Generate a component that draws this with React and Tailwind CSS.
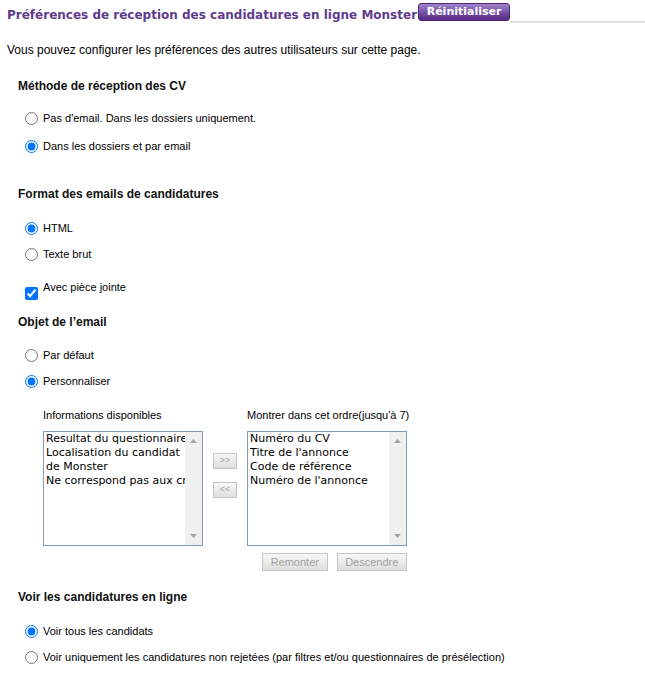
import React from 'react';

const arial = { fontFamily: '"Liberation Sans", Arial, sans-serif' };

function Radio({ checked, label, className = '' }) {
  return (
    <div className={`flex h-[20px] items-center ${className}`}>
      <input type="radio" defaultChecked={checked} className="m-0 ml-[7px] h-[13px] w-[13px] accent-[#0075ff]" />
      <span className="ml-[5px] text-[11px] text-black">{label}</span>
    </div>
  );
}

function Heading({ children, className = '' }) {
  return (
    <div className={`flex h-[20px] items-center text-[12px] font-bold text-[#111] ${className}`}>{children}</div>
  );
}

function ListBox({ items }) {
  return (
    <div className="flex h-[115px] w-[160px] border border-[#7f9db9] bg-white">
      <div
        className="flex-1 overflow-hidden whitespace-nowrap pl-[2px] text-[11px] leading-[14px] text-black"
        style={{ fontFamily: '"DejaVu Sans", Verdana, sans-serif' }}
      >
        {items.map((it) => (
          <div key={it}>{it}</div>
        ))}
      </div>
      <div className="flex w-[17px] flex-col items-center justify-between bg-[#f0f0f0] py-[7px]">
        <svg width="7" height="4" viewBox="0 0 7 4"><path d="M0 4 L3.5 0 L7 4 Z" fill="#a3a3a3" /></svg>
        <svg width="7" height="4" viewBox="0 0 7 4"><path d="M0 0 L3.5 4 L7 0 Z" fill="#a3a3a3" /></svg>
      </div>
    </div>
  );
}

function GrayButton({ children, className = '' }) {
  return (
    <div
      className={`flex items-center justify-center border border-[#c4c4c4] bg-gradient-to-b from-[#f8f8f8] to-[#dedede] text-[#a0a0a0] ${className}`}
    >
      {children}
    </div>
  );
}

export default function App() {
  return (
    <div className="min-h-screen bg-white text-black" style={arial}>
      {/* header */}
      <div className="flex h-[24px] items-end pl-[7px]">
        <span
          className="pb-[3px] text-[12px] font-bold leading-none text-[#5e3b8e]"
          style={{ fontFamily: '"DejaVu Sans", Verdana, sans-serif' }}
        >
          Préférences de réception des candidatures en ligne Monster
        </span>
        <div
          className="mb-[3px] ml-[1px] flex h-[18px] w-[92px] items-center justify-center rounded-[3px] border border-[#4d2777] bg-gradient-to-b from-[#a282c9] via-[#7a52aa] to-[#55297f] text-[11px] font-bold text-white"
          style={{ fontFamily: '"DejaVu Sans", Verdana, sans-serif' }}
        >
          Réinitialiser
        </div>
        <div className="mb-[1px] h-[2px] flex-1 bg-gradient-to-b from-[#d4d4d4] to-[#ececec]" />
      </div>

      <div className="mt-[16px] flex h-[20px] items-center pl-[7px] text-[12px]">
        Vous pouvez configurer les préférences des autres utilisateurs sur cette page.
      </div>

      <div className="pl-[18px]">
        <Heading className="mt-[16px]">Méthode de réception des CV</Heading>
        <Radio className="mt-[12px]" label="Pas d'email. Dans les dossiers uniquement." />
        <Radio className="mt-[8px]" checked label="Dans les dossiers et par email" />

        <Heading className="mt-[28px]">Format des emails de candidatures</Heading>
        <Radio className="mt-[14px]" checked label="HTML" />
        <Radio className="mt-[6px]" label="Texte brut" />

        <div className="mt-[16px] flex h-[20px] items-start">
          <input type="checkbox" defaultChecked className="m-0 ml-[7px] mt-[7px] h-[13px] w-[13px] accent-[#0075ff]" />
          <span className="ml-[5px] text-[11px] leading-[14px]">Avec pièce jointe</span>
        </div>

        <Heading className="mt-[12px]">Objet de l’email</Heading>
        <Radio className="mt-[13px]" label="Par défaut" />
        <Radio className="mt-[6px]" checked label="Personnaliser" />

        <div className="ml-[25px] mt-[14px] flex">
          <div className="w-[160px]">
            <div className="flex h-[20px] items-center text-[11px]">Informations disponibles</div>
            <div className="mt-[6px]">
              <ListBox
                items={[
                  'Resultat du questionnaire',
                  'Localisation du candidat',
                  'de Monster',
                  'Ne correspond pas aux critères',
                ]}
              />
            </div>
          </div>
          <div className="mx-[10px] flex w-[24px] flex-col pt-[48px]">
            <GrayButton className="h-[16px] text-[9px]">&gt;&gt;</GrayButton>
            <GrayButton className="mt-[13px] h-[16px] text-[9px]">&lt;&lt;</GrayButton>
          </div>
          <div className="w-[160px]">
            <div className="flex h-[20px] items-center whitespace-nowrap text-[11px]">Montrer dans cet ordre(jusqu'à 7)</div>
            <div className="mt-[6px]">
              <ListBox items={['Numéro du CV', "Titre de l'annonce", 'Code de référence', "Numéro de l'annonce"]} />
            </div>
            <div className="ml-[15px] mt-[7px] flex gap-[9px]">
              <GrayButton className="h-[18px] w-[67px] text-[11px]">Remonter</GrayButton>
              <GrayButton className="h-[18px] w-[72px] text-[11px]">Descendre</GrayButton>
            </div>
          </div>
        </div>

        <Heading className="mt-[16px]">Voir les candidatures en ligne</Heading>
        <Radio className="mt-[14px]" checked label="Voir tous les candidats" />
        <Radio className="mt-[6px]" label="Voir uniquement les candidatures non rejetées (par filtres et/ou questionnaires de présélection)" />
      </div>
    </div>
  );
}
